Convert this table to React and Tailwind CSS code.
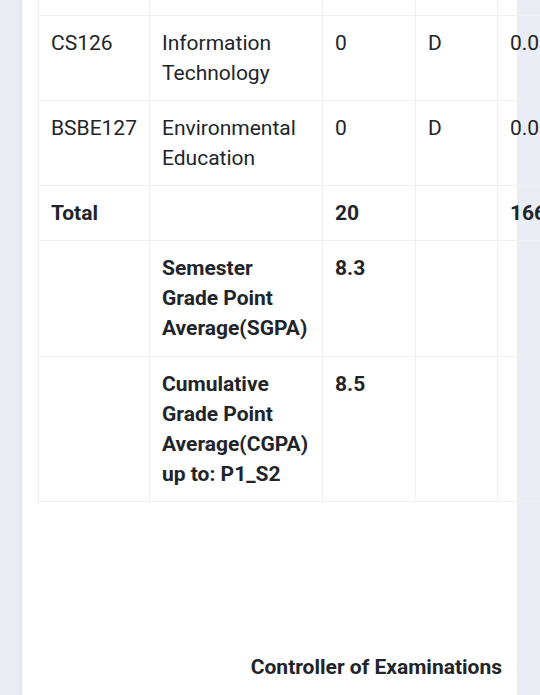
import React from 'react';

const rows = [
  { code: 'CS126', name: 'Information Technology', credit: '0', grade: 'D', points: '0.0' },
  { code: 'BSBE127', name: 'Environmental Education', credit: '0', grade: 'D', points: '0.0' },
];

export default function App() {
  const cell = 'border border-[#eef0f2] px-3 py-3 align-top';

  return (
    <div className="min-h-[695px] h-[695px] overflow-hidden bg-[#eaeef4] flex font-['Roboto',sans-serif] text-[21px] leading-[30px] text-[#212529]">
      <div className="w-[19px] shrink-0" />
      <div className="w-[3px] shrink-0 bg-[#e3e7ee]" />
      {/* Result card */}
      <div className="w-[495px] shrink-0 bg-white flex flex-col">
        <div className="pl-4 w-[620px]">
          <table className="border-collapse table-fixed w-[620px]">
            <colgroup>
              <col className="w-[111px]" />
              <col className="w-[173px]" />
              <col className="w-[93px]" />
              <col className="w-[82px]" />
              <col className="w-[161px]" />
            </colgroup>
            <tbody>
              <tr className="h-[15px]">
                <td className="border border-t-0 border-[#eef0f2] p-0" />
                <td className="border border-t-0 border-[#eef0f2] p-0" />
                <td className="border border-t-0 border-[#eef0f2] p-0" />
                <td className="border border-t-0 border-[#eef0f2] p-0" />
                <td className="border border-t-0 border-[#eef0f2] p-0" />
              </tr>
              {rows.map((r) => (
                <tr key={r.code}>
                  <td className={cell}>{r.code}</td>
                  <td className={cell}>{r.name}</td>
                  <td className={cell}>{r.credit}</td>
                  <td className={cell}>{r.grade}</td>
                  <td className={cell}>{r.points}</td>
                </tr>
              ))}
              <tr className="font-bold">
                <td className={cell}>Total</td>
                <td className={cell} />
                <td className={cell}>20</td>
                <td className={cell} />
                <td className={cell}>166</td>
              </tr>
              <tr className="font-bold">
                <td className={`${cell} pb-[13px]`} />
                <td className={`${cell} pb-[13px]`}>Semester Grade Point Average(SGPA)</td>
                <td className={`${cell} pb-[13px]`}>8.3</td>
                <td className={`${cell} pb-[13px]`} />
                <td className={`${cell} pb-[13px]`} />
              </tr>
              <tr className="font-bold">
                <td className={cell} />
                <td className={cell}>Cumulative Grade Point Average(CGPA) up to: P1_S2</td>
                <td className={cell}>8.5</td>
                <td className={cell} />
                <td className={cell} />
              </tr>
            </tbody>
          </table>
        </div>
        <div className="pt-[150px] pr-[15px] text-right font-bold">
          Controller of Examinations
        </div>
      </div>
    </div>
  );
}
